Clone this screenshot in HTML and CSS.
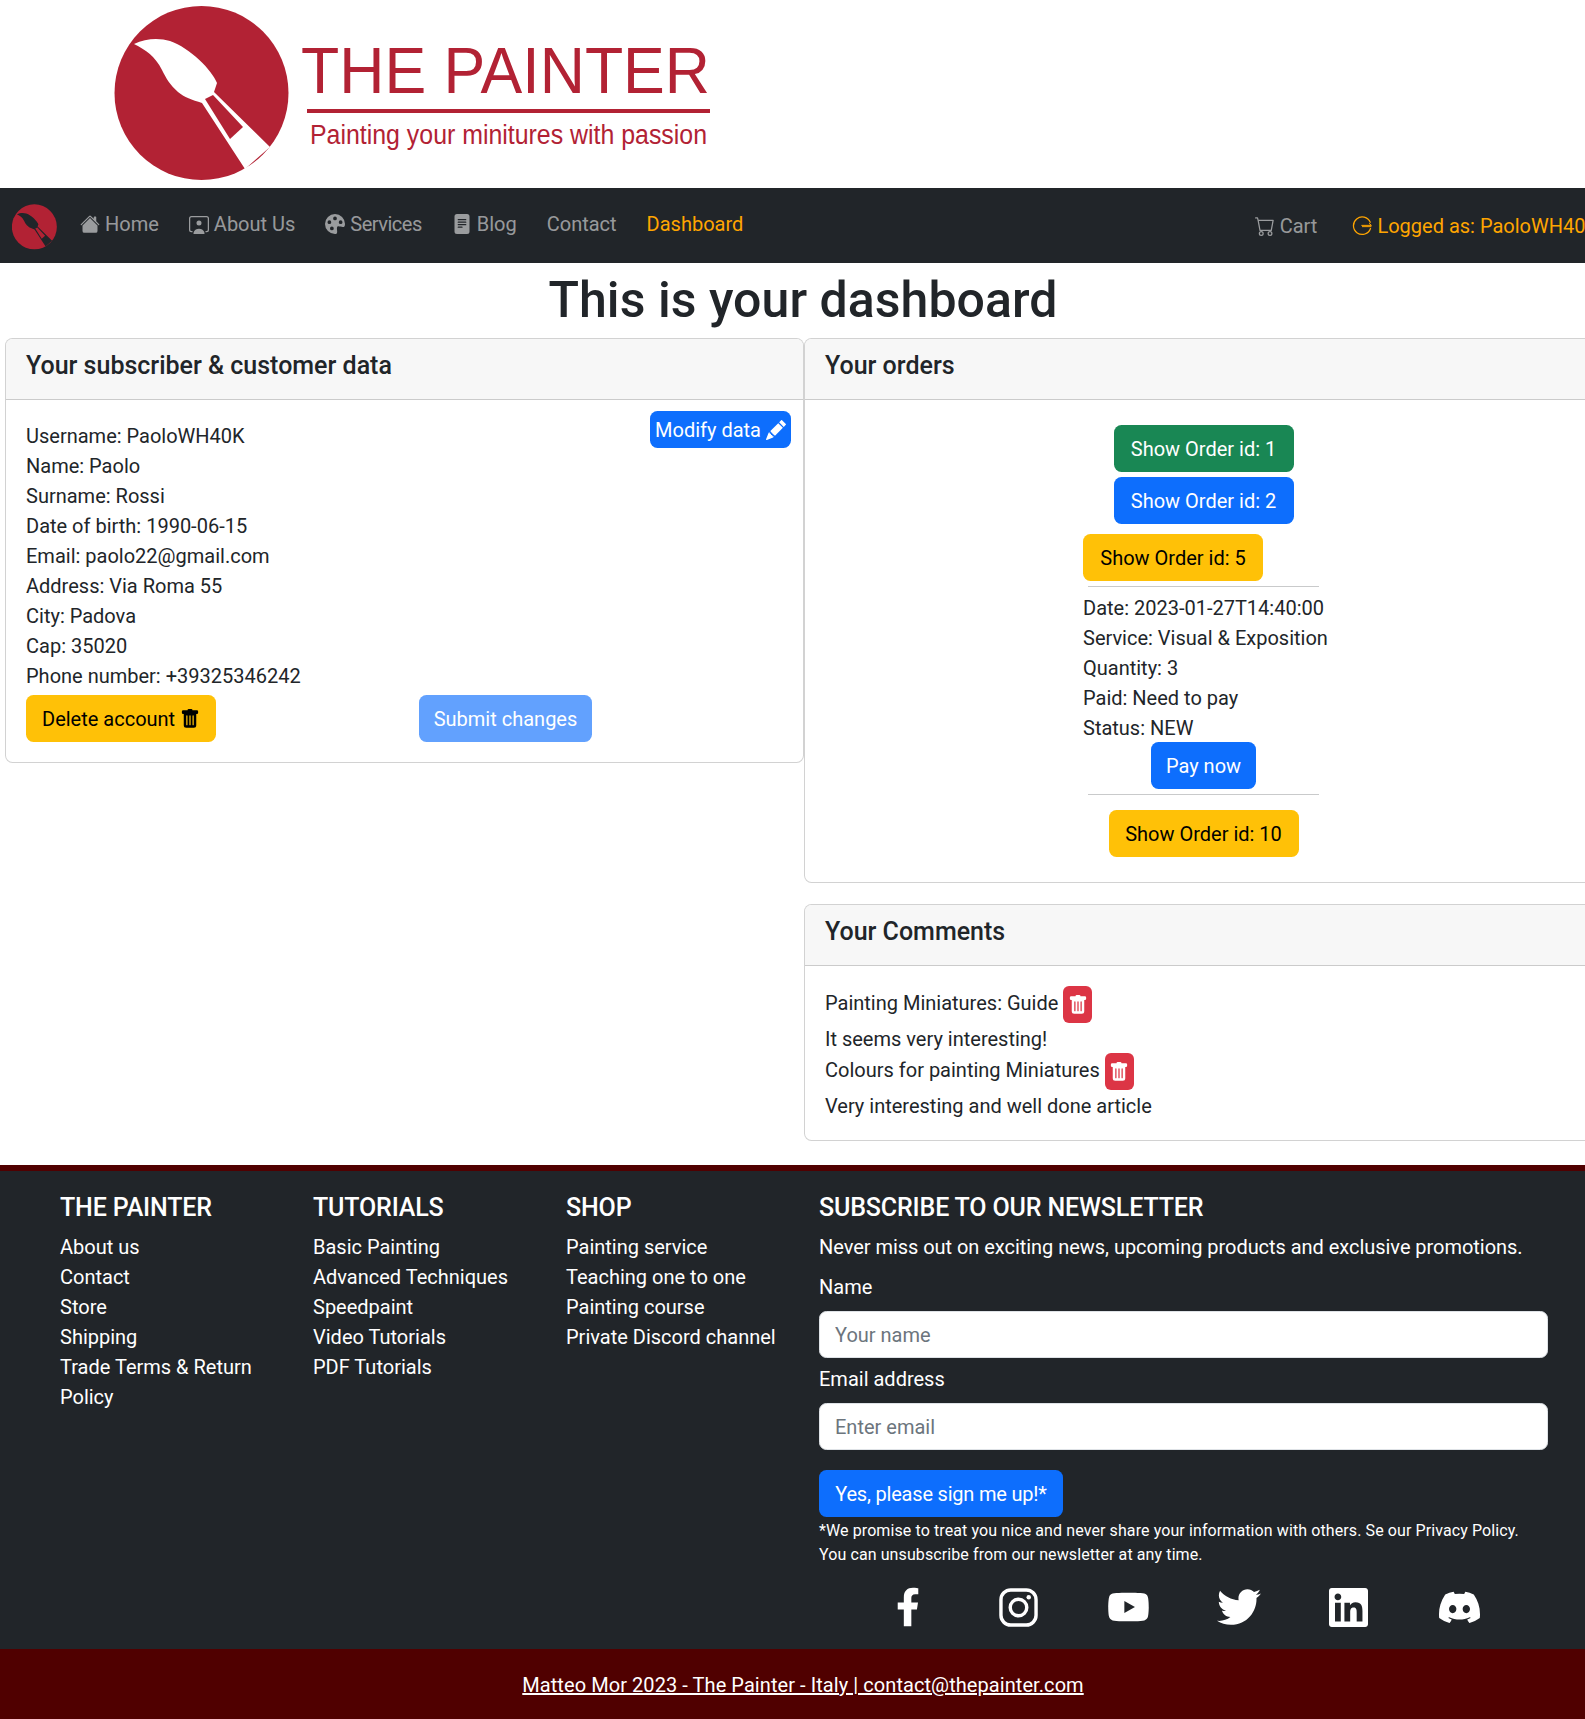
FILE: index.html
```
<!DOCTYPE html>
<html lang="en">
<head>
<meta charset="utf-8">
<title>The Painter - Dashboard</title>
<link rel="stylesheet" href="styles.css">
</head>
<body>
<svg class="sprite" aria-hidden="true">
  <symbol id="i-house" viewBox="0 0 16 16"><path d="M8.707 1.5a1 1 0 0 0-1.414 0L.646 8.146a.5.5 0 0 0 .708.708L8 2.207l6.646 6.647a.5.5 0 0 0 .708-.708L13 5.793V2.5a.5.5 0 0 0-.5-.5h-1a.5.5 0 0 0-.5.5v1.293L8.707 1.5Z"/><path d="m8 3.293 6 6V13.5a1.5 1.5 0 0 1-1.5 1.5h-9A1.5 1.5 0 0 1 2 13.5V9.293l6-6Z"/></symbol>
  <symbol id="i-person" viewBox="0 0 16 16"><path d="M8 9.2a2 2 0 1 0 0-4 2 2 0 0 0 0 4ZM3.6 16c0-.8 0-1.1.4-2 .6-1.2 2-2.2 4-2.2s3.4 1 4 2.2c.4.9.4 1.2.4 2H3.600Z"/><path d="M2 1.500a2 2 0 0 0-2 2v9a2 2 0 0 0 2 2h.8v-1H2a1 1 0 0 1-1-1v-9a1 1 0 0 1 1-1h12a1 1 0 0 1 1 1v9a1 1 0 0 1-1 1h-.8v1h.8a2 2 0 0 0 2-2v-9a2 2 0 0 0-2-2H2Z"/></symbol>
  <symbol id="i-palette" viewBox="0 0 16 16"><path d="M12.433 10.07C14.133 10.585 16 11.15 16 8a8 8 0 1 0-8 8c1.996 0 1.826-1.504 1.649-3.08-.124-1.101-.252-2.237.351-2.92.465-.527 1.42-.237 2.433.07zM8 5a1.500 1.500 0 1 1 0-3 1.500 1.500 0 0 1 0 3zm4.500 3a1.500 1.500 0 1 1 0-3 1.500 1.500 0 0 1 0 3zM5 6.500a1.500 1.500 0 1 1-3 0 1.500 1.500 0 0 1 3 0zm.5 6.500a1.500 1.500 0 1 1 0-3 1.500 1.500 0 0 1 0 3z"/></symbol>
  <symbol id="i-file" viewBox="0 0 16 16"><path d="M12 0H4a2 2 0 0 0-2 2v12a2 2 0 0 0 2 2h8a2 2 0 0 0 2-2V2a2 2 0 0 0-2-2zM5 4h6a.5.5 0 0 1 0 1H5a.5.5 0 0 1 0-1zm-.5 2.500A.5.5 0 0 1 5 6h6a.5.5 0 0 1 0 1H5a.5.5 0 0 1-.5-.5zM5 8h6a.5.5 0 0 1 0 1H5a.5.5 0 0 1 0-1zm0 2h3a.5.5 0 0 1 0 1H5a.5.5 0 0 1 0-1z"/></symbol>
  <symbol id="i-cart" viewBox="0 0 16 16"><path d="M0 1.500A.5.5 0 0 1 .5 1H2a.5.5 0 0 1 .485.379L2.890 3H14.500a.5.5 0 0 1 .491.592l-1.500 8A.5.5 0 0 1 13 12H4a.5.5 0 0 1-.491-.408L2.010 3.607 1.610 2H.5a.5.5 0 0 1-.5-.5zM3.102 4l1.313 7h8.170l1.313-7H3.102zM5 12a2 2 0 1 0 0 4 2 2 0 0 0 0-4zm7 0a2 2 0 1 0 0 4 2 2 0 0 0 0-4zm-7 1a1 1 0 1 1 0 2 1 1 0 0 1 0-2zm7 0a1 1 0 1 1 0 2 1 1 0 0 1 0-2z"/></symbol>
  <symbol id="i-login" viewBox="0 0 16 16"><path d="M14.600 5A7 7 0 1 0 14.800 10" fill="none" stroke="currentColor" stroke-width="1" stroke-linecap="round"/><path d="M7.500 7.500H15.500L13.600 5.800M15.500 8.500H8" fill="none" stroke="currentColor" stroke-width=".8"/></symbol>
  <symbol id="i-pencil" viewBox="0 0 16 16"><path d="M12.854.146a.5.5 0 0 0-.707 0L10.500 1.793 14.207 5.500l1.647-1.646a.5.5 0 0 0 0-.708l-3-3zm.646 6.061L9.793 2.500 3.293 9H3.500a.5.5 0 0 1 .5.5v.5h.5a.5.5 0 0 1 .5.5v.5h.5a.5.5 0 0 1 .5.5v.5h.5a.5.5 0 0 1 .5.5v.207l6.500-6.500zm-7.468 7.468A.5.5 0 0 1 6 13.500V13h-.5a.5.5 0 0 1-.5-.5V12h-.5a.5.5 0 0 1-.5-.5V11h-.5a.5.5 0 0 1-.5-.5V10h-.5a.499.499 0 0 1-.175-.032l-.179.178a.5.5 0 0 0-.110.168l-2 5a.5.5 0 0 0 .650.650l5-2a.5.5 0 0 0 .168-.110l.178-.178z"/></symbol>
  <symbol id="i-trash" viewBox="0 0 16 16"><path d="M2.500 1a1 1 0 0 0-1 1v1a1 1 0 0 0 1 1H3v9a2 2 0 0 0 2 2h6a2 2 0 0 0 2-2V4h.5a1 1 0 0 0 1-1V2a1 1 0 0 0-1-1H10a1 1 0 0 0-1-1H7a1 1 0 0 0-1 1H2.500zm3 4a.5.5 0 0 1 .5.5v7a.5.5 0 0 1-1 0v-7a.5.5 0 0 1 .5-.5zM8 5a.5.5 0 0 1 .5.5v7a.5.5 0 0 1-1 0v-7A.5.5 0 0 1 8 5zm3 .5v7a.5.5 0 0 1-1 0v-7a.5.5 0 0 1 1 0z"/></symbol>
  <symbol id="i-fb" viewBox="0 0 320 512"><path d="M279.140 288l14.220-92.660h-88.910v-60.130c0-25.350 12.420-50.060 52.240-50.060h40.420V6.260S260.430 0 225.360 0c-73.220 0-121.080 44.380-121.080 124.720v70.620H22.890V288h81.390v224h100.170V288z"/></symbol>
  <symbol id="i-yt" viewBox="0 0 576 512"><path d="M549.655 124.083c-6.281-23.650-24.787-42.276-48.284-48.597C458.781 64 288 64 288 64S117.220 64 74.629 75.486c-23.497 6.322-42.003 24.947-48.284 48.597-11.412 42.867-11.412 132.305-11.412 132.305s0 89.438 11.412 132.305c6.281 23.650 24.787 41.500 48.284 47.821C117.220 448 288 448 288 448s170.780 0 213.371-11.486c23.497-6.321 42.003-24.171 48.284-47.821 11.412-42.867 11.412-132.305 11.412-132.305s0-89.438-11.412-132.305zm-317.510 213.508V175.185l142.739 81.205-142.739 81.201z"/></symbol>
  <symbol id="i-tw" viewBox="0 0 512 512"><path d="M459.370 151.716c.325 4.548.325 9.097.325 13.645 0 138.720-105.583 298.558-298.558 298.558-59.452 0-114.680-17.219-161.137-47.106 8.447.974 16.568 1.299 25.340 1.299 49.055 0 94.213-16.568 130.274-44.832-46.132-.975-84.792-31.188-98.112-72.772 6.498.974 12.995 1.624 19.818 1.624 9.421 0 18.843-1.300 27.614-3.573-48.081-9.747-84.143-51.980-84.143-102.985v-1.299c13.969 7.797 30.214 12.670 47.431 13.319-28.264-18.843-46.781-51.005-46.781-87.391 0-19.492 5.197-37.360 14.294-52.954 51.655 63.675 129.300 105.258 216.365 109.807-1.624-7.797-2.599-15.918-2.599-24.040 0-57.828 46.782-104.934 104.934-104.934 30.213 0 57.502 12.670 76.670 33.137 23.715-4.548 46.456-13.320 66.599-25.340-7.798 24.366-24.366 44.833-46.132 57.827 21.117-2.273 41.584-8.122 60.426-16.243-14.292 20.791-32.161 39.308-52.628 54.253z"/></symbol>
  <symbol id="i-li" viewBox="0 32 448 448"><path d="M416 32H31.900C14.300 32 0 46.500 0 64.300v383.400C0 465.500 14.300 480 31.900 480H416c17.600 0 32-14.500 32-32.300V64.300c0-17.800-14.400-32.300-32-32.300zM135.400 416H69V202.200h66.500V416zm-33.200-243c-21.300 0-38.500-17.300-38.500-38.500S80.900 96 102.200 96c21.200 0 38.500 17.300 38.500 38.500 0 21.300-17.200 38.500-38.500 38.500zm282.100 243h-66.400V312c0-24.800-.5-56.700-34.500-56.700-34.600 0-39.900 27-39.900 54.900V416h-66.400V202.200h63.700v29.200h.9c8.900-16.800 30.600-34.500 62.900-34.500 67.200 0 79.700 44.300 79.700 101.900V416z"/></symbol>
  <symbol id="i-dc" viewBox="0 0 16 16"><path d="M13.545 2.907a13.227 13.227 0 0 0-3.257-1.011.05.05 0 0 0-.052.025c-.141.25-.297.577-.406.833a12.190 12.190 0 0 0-3.658 0 8.258 8.258 0 0 0-.412-.833.051.051 0 0 0-.052-.025c-1.125.194-2.220.534-3.257 1.011a.041.041 0 0 0-.021.018C.356 6.024-.213 9.047.066 12.032c.001.014.01.028.021.037a13.276 13.276 0 0 0 3.995 2.020.05.05 0 0 0 .056-.019c.308-.42.582-.863.818-1.329a.05.05 0 0 0-.01-.059.051.051 0 0 0-.018-.011 8.875 8.875 0 0 1-1.248-.595.05.05 0 0 1-.02-.066.051.051 0 0 1 .015-.019c.084-.063.168-.129.248-.195a.05.05 0 0 1 .051-.007c2.619 1.196 5.454 1.196 8.041 0a.052.052 0 0 1 .053.007c.08.066.164.132.248.195a.051.051 0 0 1-.004.085 8.254 8.254 0 0 1-1.249.594.05.05 0 0 0-.03.03.052.052 0 0 0 .003.041c.24.465.515.909.817 1.329a.05.05 0 0 0 .056.019 13.235 13.235 0 0 0 4.001-2.020.049.049 0 0 0 .021-.037c.334-3.451-.559-6.449-2.366-9.106a.034.034 0 0 0-.02-.019Zm-8.198 7.307c-.789 0-1.438-.724-1.438-1.612 0-.889.637-1.613 1.438-1.613.807 0 1.450.73 1.438 1.613 0 .888-.637 1.612-1.438 1.612Zm5.316 0c-.788 0-1.438-.724-1.438-1.612 0-.889.637-1.613 1.438-1.613.807 0 1.451.73 1.438 1.613 0 .888-.631 1.612-1.438 1.612Z"/></symbol>
</svg>

<header class="brand">
  <svg class="brand-logo" viewBox="0 0 800 188" role="img" aria-label="The Painter logo">
    <circle class="logo-red" cx="201.500" cy="93" r="87"/>
    <path class="logo-white" d="M134 44C146 38 160 38 170 41 190 48 212 70 217 83L214 92 270 147 245 169 202 103C192 100 184 97 178 92 170 85 166 78 162 70 155 56 146 50 134 44Z"/>
    <path class="logo-red" d="M205 99 213 95 243 127 230 139Z"/>
    <text class="logo-title" x="301" y="93" textLength="409" lengthAdjust="spacingAndGlyphs">THE PAINTER</text>
    <rect class="logo-red" x="307" y="109" width="403" height="4"/>
    <text class="logo-tag" x="310" y="144" textLength="397" lengthAdjust="spacingAndGlyphs">Painting your minitures with passion</text>
  </svg>
</header>

<nav class="navbar">
  <span class="nav-logo"><svg viewBox="0 0 174 175" width="45" height="46"><g transform="translate(-115 -6)"><circle class="logo-red" cx="201.500" cy="93" r="87"/><path class="logo-dark" d="M134 44C146 38 160 38 170 41 190 48 212 70 217 83L214 92 270 147 245 169 202 103C192 100 184 97 178 92 170 85 166 78 162 70 155 56 146 50 134 44Z"/><path class="logo-red" d="M205 99 213 95 243 127 230 139Z"/></g></svg></span>
  <ul class="nav-main">
    <li><a class="nav-link"><svg class="ico nav-ico"><use href="#i-house"/></svg>Home</a></li>
    <li><a class="nav-link"><svg class="ico nav-ico"><use href="#i-person"/></svg>About Us</a></li>
    <li><a class="nav-link nav-tight"><svg class="ico nav-ico"><use href="#i-palette"/></svg>Services</a></li>
    <li><a class="nav-link"><svg class="ico nav-ico"><use href="#i-file"/></svg>Blog</a></li>
    <li><a class="nav-link">Contact</a></li>
    <li><a class="nav-link nav-active">Dashboard</a></li>
  </ul>
  <ul class="nav-side">
    <li><a class="nav-link"><svg class="ico nav-ico"><use href="#i-cart"/></svg>Cart</a></li>
    <li><a class="nav-link nav-active"><svg class="ico nav-ico"><use href="#i-login"/></svg>Logged as: PaoloWH40K</a></li>
  </ul>
</nav>

<main>
  <h1 class="page-title">This is your dashboard</h1>
  <div class="columns">
    <section class="card">
      <h5 class="card-header">Your subscriber &amp; customer data</h5>
      <div class="card-body">
        <div class="data-top">
          <div class="data-list">
            <div>Username: PaoloWH40K</div>
            <div>Name: Paolo</div>
            <div>Surname: Rossi</div>
            <div>Date of birth: 1990-06-15</div>
            <div>Email: paolo22@gmail.com</div>
            <div>Address: Via Roma 55</div>
            <div>City: Padova</div>
            <div>Cap: 35020</div>
            <div>Phone number: +39325346242</div>
          </div>
          <button class="btn btn-blue btn-modify">Modify data<svg class="ico ico-after"><use href="#i-pencil"/></svg></button>
        </div>
        <div class="data-actions">
          <button class="btn btn-yellow btn-delete">Delete account<svg class="ico ico-after"><use href="#i-trash"/></svg></button>
          <button class="btn btn-blue btn-faded">Submit changes</button>
        </div>
      </div>
    </section>
    <div class="stack">
      <section class="card">
        <h5 class="card-header">Your orders</h5>
        <div class="card-body orders">
          <button class="btn btn-green btn-order">Show Order id: 1</button>
          <button class="btn btn-blue btn-order">Show Order id: 2</button>
          <div class="order-open">
            <button class="btn btn-yellow btn-order">Show Order id: 5</button>
            <hr class="rule">
            <div>Date: 2023-01-27T14:40:00</div>
            <div>Service: Visual &amp; Exposition</div>
            <div>Quantity: 3</div>
            <div>Paid: Need to pay</div>
            <div>Status: NEW</div>
            <button class="btn btn-blue btn-pay">Pay now</button>
            <hr class="rule">
          </div>
          <button class="btn btn-yellow btn-last">Show Order id: 10</button>
        </div>
      </section>
      <section class="card">
        <h5 class="card-header">Your Comments</h5>
        <div class="card-body">
          <div class="comment-row"><span class="comment-title">Painting Miniatures: Guide</span><button class="btn btn-red btn-icon"><svg class="ico"><use href="#i-trash"/></svg></button></div>
          <div class="comment-text">It seems very interesting!</div>
          <div class="comment-row"><span class="comment-title">Colours for painting Miniatures</span><button class="btn btn-red btn-icon"><svg class="ico"><use href="#i-trash"/></svg></button></div>
          <div class="comment-text">Very interesting and well done article</div>
        </div>
      </section>
    </div>
  </div>
</main>

<footer class="footer">
  <div class="footer-main">
    <div class="f-col">
      <h5 class="f-title">THE PAINTER</h5>
      <ul class="f-links"><li>About us</li><li>Contact</li><li>Store</li><li>Shipping</li><li>Trade Terms &amp; Return Policy</li></ul>
    </div>
    <div class="f-col">
      <h5 class="f-title">TUTORIALS</h5>
      <ul class="f-links"><li>Basic Painting</li><li>Advanced Techniques</li><li>Speedpaint</li><li>Video Tutorials</li><li>PDF Tutorials</li></ul>
    </div>
    <div class="f-col">
      <h5 class="f-title">SHOP</h5>
      <ul class="f-links"><li>Painting service</li><li>Teaching one to one</li><li>Painting course</li><li>Private Discord channel</li></ul>
    </div>
    <div class="f-news">
      <h5 class="f-title">SUBSCRIBE TO OUR NEWSLETTER</h5>
      <p class="f-lead">Never miss out on exciting news, upcoming products and exclusive promotions.</p>
      <label class="f-label">Name</label>
      <input class="f-input" type="text" placeholder="Your name">
      <label class="f-label">Email address</label>
      <input class="f-input" type="email" placeholder="Enter email">
      <button class="btn btn-blue btn-sign">Yes, please sign me up!*</button>
      <p class="f-small">*We promise to treat you nice and never share your information with others. Se our Privacy Policy.<br>You can unsubscribe from our newsletter at any time.</p>
      <div class="social">
        <svg class="soc soc-fb"><use href="#i-fb"/></svg>
        <svg class="soc soc-ig" viewBox="0 0 40 40"><rect x="2" y="2" width="36" height="36" rx="10" fill="none" stroke="#fff" stroke-width="3.500"/><circle cx="20" cy="20" r="8.500" fill="none" stroke="#fff" stroke-width="3.500"/><circle cx="30.500" cy="9.500" r="2.300" fill="#fff"/></svg>
        <svg class="soc soc-yt"><use href="#i-yt"/></svg>
        <svg class="soc soc-tw"><use href="#i-tw"/></svg>
        <svg class="soc soc-li"><use href="#i-li"/></svg>
        <svg class="soc soc-dc"><use href="#i-dc"/></svg>
      </div>
    </div>
  </div>
  <div class="footer-bottom"><a class="copy">Matteo Mor 2023 - The Painter - Italy | contact@thepainter.com</a></div>
</footer>
</body>
</html>
```
FILE: styles.css
```
* { box-sizing: border-box; }
html { overflow-x: hidden; font-size: 20px; }
body {
  margin: 0;
  width: 1585px;
  overflow-x: hidden;
  font-family: Roboto, "Noto Sans", sans-serif;
  font-size: 20px;
  line-height: 30px;
  color: #212529;
  background: #fff;
}
.sprite { display: none; }
.ico { width: 20px; height: 20px; fill: currentColor; display: inline-block; vertical-align: -3px; }

/* brand */
.brand { height: 188px; }
.brand-logo { display: block; width: 800px; height: 188px; }
.logo-red { fill: #b22234; }
.logo-dark { fill: #212529; }
.logo-white { fill: #fff; }
.logo-title { font-family: "Liberation Sans", sans-serif; font-size: 64px; fill: #b22234; }
.logo-tag { font-family: "Liberation Sans", sans-serif; font-size: 27px; fill: #b22234; }

/* navbar */
.navbar { height: 75px; background: #212529; display: flex; align-items: center; padding-left: 12px; white-space: nowrap; }
.nav-logo { display: block; width: 45px; height: 46px; margin-right: 13px; margin-top: 2px; }
.nav-main, .nav-side { list-style: none; margin: 0; padding: 0; display: flex; }
.nav-main { gap: 10px; margin-top: -4px; }
.nav-side { margin-left: auto; gap: 15px; margin-top: 0; margin-right: -23px; }
.nav-link { display: block; padding: 8px 10px; color: rgba(255, 255, 255, .55); }
.nav-active { color: #ffa500; }
.nav-tight { letter-spacing: -.5px; }
.nav-ico { margin-right: 5px; }

/* main */
.page-title { margin: 0; height: 75px; font-size: 50px; line-height: 60px; font-weight: 500; text-align: center; padding-top: 7px; padding-left: 21px; letter-spacing: .05px; }
.columns { display: grid; grid-template-columns: 799px 799px; padding-left: 5px; align-items: start; height: 827px; }
.stack { display: flex; flex-direction: column; gap: 21px; }
.card { border: 1px solid rgba(0, 0, 0, .175); border-radius: 7.5px; background: #fff; overflow: hidden; }
.card-header { margin: 0; padding: 12px 20px 0; height: 61px; font-size: 25px; line-height: 30px; font-weight: 500; background: #f7f7f7; border-bottom: 1px solid rgba(0, 0, 0, .175); color: #212529; }
.card-body { padding: 20px; }

/* buttons */
.btn { display: inline-block; border: 1px solid transparent; border-radius: 7.5px; padding: 7.5px 15px; font: inherit; line-height: 30px; color: #fff; white-space: nowrap; text-align: center; }
.btn-blue { background: #0d6efd; }
.btn-green { background: #198754; }
.btn-yellow { background: #ffc107; color: #000; }
.btn-red { background: #dc3545; }
.btn-faded { background: #62a1fe; }
.ico-after { margin-left: 5px; }

/* subscriber data */
.data-top { display: flex; justify-content: space-between; align-items: flex-start; }
.data-list { padding-top: 1px; margin-bottom: -1px; }
.btn-modify { padding: 2.5px 4px; margin-top: -9px; margin-right: -8px; }
.data-actions { display: grid; grid-template-columns: 393px auto; justify-content: start; margin-top: 5px; }
.btn-delete { justify-self: start; }
.btn-faded { justify-self: start; width: 173px; padding-left: 0; padding-right: 0; }

/* orders */
.orders { display: flex; flex-direction: column; align-items: center; padding-top: 25px; padding-bottom: 25px; white-space: nowrap; }
.btn-order { width: 180px; padding-left: 0; padding-right: 0; }
.orders > .btn-blue { margin-top: 5px; }
.order-open { width: 241px; margin-top: 10px; }
.order-open .btn-order { display: block; }
.rule { margin: 5px 5px 6px; height: 1px; border: 0; background: #c9cacb; }
.btn-pay { display: block; margin: -1px auto 5px; width: 105px; padding-left: 0; padding-right: 0; }
.btn-last { width: 190px; margin-top: 9px; padding-left: 0; padding-right: 0; }

/* comments */
.comment-row { display: flex; align-items: center; height: 37px; }
.comment-title { margin-bottom: 3px; }
.comment-text { height: 30px; padding-top: 1px; }
.btn-icon { width: 29px; height: 37px; padding: 0; margin-left: 5px; display: flex; align-items: center; justify-content: center; border-radius: 6px; }

/* footer */
.footer { border-top: 6px solid #500000; background: #212529; color: #fff; }
.footer-main { display: flex; height: 478px; padding: 21px 0 0 60px; }
.f-col { width: 253px; padding-right: 25px; }
.f-news { width: 729px; }
.f-title { margin: 0 0 9px; padding-top: 1px; font-size: 25px; line-height: 30px; font-weight: 500; letter-spacing: -.15px; }
.f-links { list-style: none; margin: 0; padding: 0; }
.f-lead { margin: 0 0 10px; white-space: nowrap; letter-spacing: -.04px; }
.f-label { display: block; margin-bottom: 9px; }
.f-input { display: block; width: 100%; height: 47px; padding: 7.5px 15px; margin-bottom: 6px; border: 1px solid #dee2e6; border-radius: 7.5px; font: inherit; color: #212529; background: #fff; }
.f-input::placeholder { color: #6c757d; }
.btn-sign { display: block; margin-top: 20px; width: 244px; padding-left: 0; padding-right: 0; letter-spacing: -.2px; }
.f-small { margin: 0; font-size: 16px; line-height: 24px; padding-top: 2px; white-space: nowrap; letter-spacing: .1px; }
.social { display: grid; grid-template-columns: repeat(6, 110.3px); justify-content: center; justify-items: center; align-items: center; margin-top: 16px; height: 48px; }
.soc { fill: #fff; display: block; }
.soc-fb { width: 24px; height: 44px; }
.soc-ig { width: 39px; height: 39px; }
.soc-yt { width: 43px; height: 38px; }
.soc-tw { width: 44px; height: 44px; }
.soc-li { width: 39px; height: 39px; }
.soc-dc { width: 41px; height: 41px; }
.footer-bottom { height: 70px; background: #500000; display: flex; align-items: center; justify-content: center; padding: 2px 0 0 21px; }
.copy { color: #fff; text-decoration: underline; letter-spacing: .07px; }
```
